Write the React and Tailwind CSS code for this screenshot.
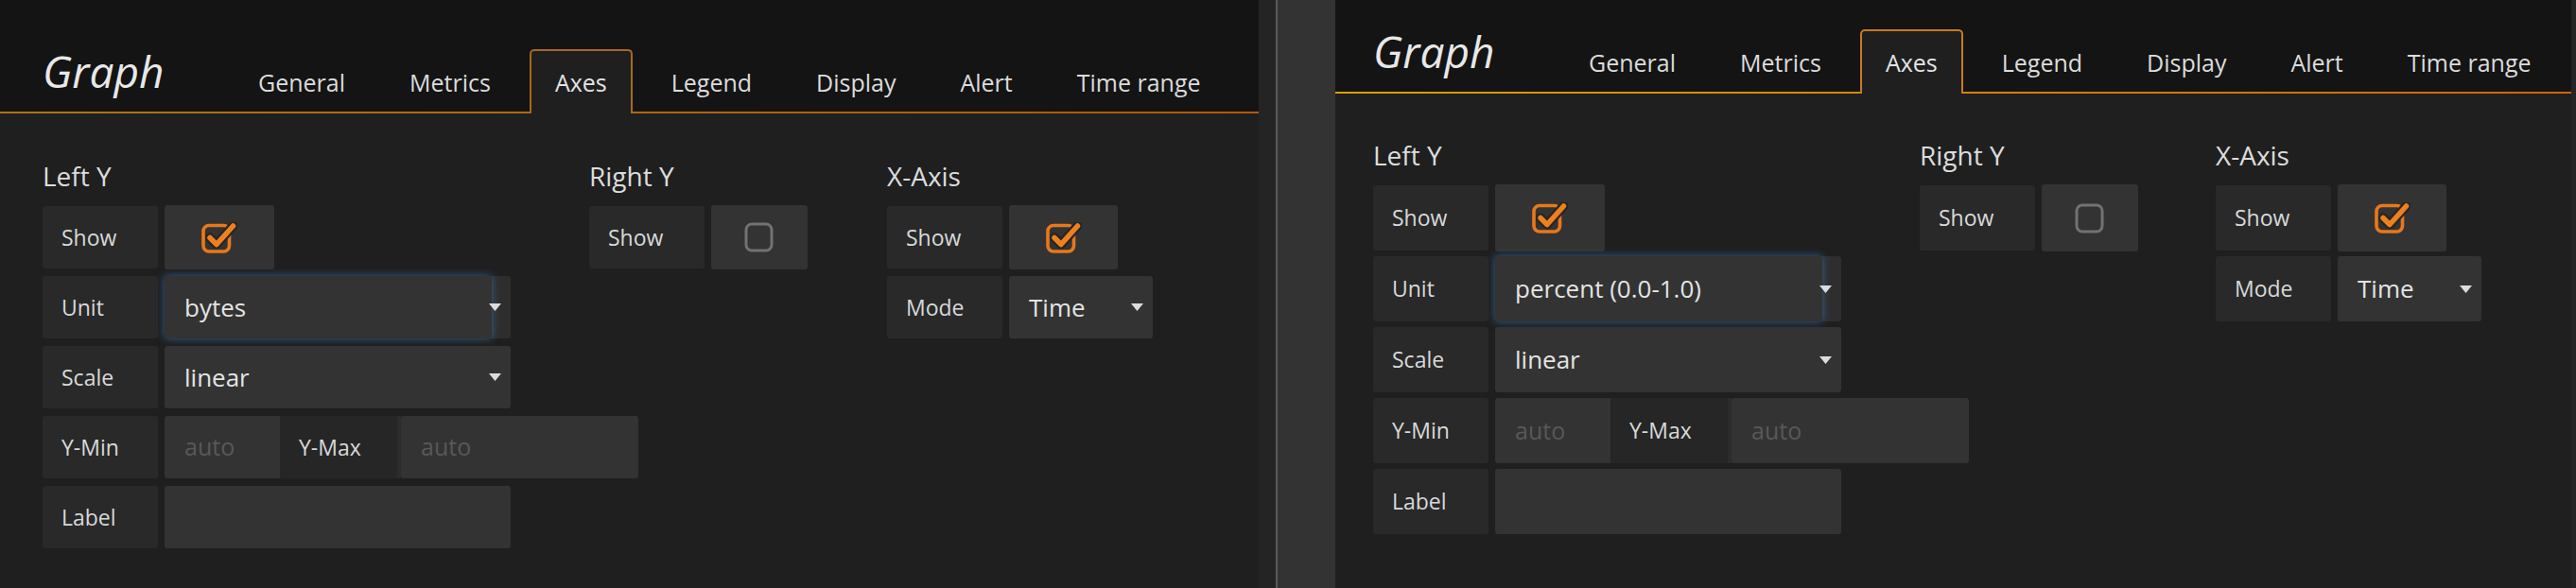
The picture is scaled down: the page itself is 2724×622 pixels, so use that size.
import React from "react";

const TABS = ["General", "Metrics", "Axes", "Legend", "Display", "Alert", "Time range"];

function Caret() {
  return (
    <svg
      width="13"
      height="8"
      viewBox="0 0 13 8"
      className="absolute right-[10px] top-1/2 -translate-y-1/2"
    >
      <polygon points="0,0 13,0 6.5,8" fill="#dcdcdc" />
    </svg>
  );
}

function CheckOn() {
  return (
    <svg width="38" height="33" viewBox="0 0 38 33">
      <rect x="2" y="3.5" width="27.5" height="27.5" rx="6" fill="none" stroke="#e8781a" strokeWidth="3.6" />
      <path d="M9 16.5 L16 23.5 L33.5 4" fill="none" stroke="#262626" strokeWidth="10" strokeLinecap="round" strokeLinejoin="round" />
      <path d="M9 16.5 L16 23.5 L33.5 4" fill="none" stroke="#f0801c" strokeWidth="5.5" strokeLinecap="round" strokeLinejoin="round" />
    </svg>
  );
}

function CheckOff() {
  return (
    <svg width="32" height="32" viewBox="0 0 32 32">
      <rect x="2" y="2" width="27" height="28" rx="6" fill="none" stroke="#727272" strokeWidth="3" />
    </svg>
  );
}

function FormLabel({ children, className = "" }) {
  return (
    <div
      className={
        "flex h-full w-[122px] shrink-0 items-center rounded-[3px] bg-[#292929] pl-[20px] text-[23px] text-[#d8d9da] " +
        className
      }
    >
      {children}
    </div>
  );
}

function Row({ right, children }) {
  return (
    <div
      className={
        "flex items-center whitespace-nowrap " + (right ? "mb-[6px] h-[69px]" : "mb-[8px] h-[66px]")
      }
    >
      {children}
    </div>
  );
}

function Select({ value, className, focused }) {
  return (
    <div
      className={
        "relative flex h-full shrink-0 items-center rounded-[3px] " +
        (focused ? "bg-[#2e2e2e] " : "bg-[#333333] ") +
        className
      }
    >
      {focused && (
        <div className="absolute inset-y-0 left-0 right-[20px] rounded-[3px] bg-[#333333] shadow-[0_0_9px_rgba(64,140,210,0.6)]" />
      )}
      <span className="relative pl-[21px] text-[26px] text-[#e4e4e4]">{value}</span>
      <Caret />
    </div>
  );
}

function Input({ className, placeholder }) {
  return (
    <div className={"flex h-full shrink-0 items-center rounded-[3px] bg-[#333333] pl-[21px] text-[25px] text-[#585858] " + className}>
      {placeholder}
    </div>
  );
}

function CheckCell({ on, className }) {
  return (
    <div className={"flex h-[calc(100%+2px)] shrink-0 items-center justify-center rounded-[3px] bg-[#333333] " + className}>
      {on ? <CheckOn /> : <CheckOff />}
    </div>
  );
}

function Section({ title, className, children }) {
  return (
    <div className={"shrink-0 " + className}>
      <div className="mb-[15px] text-[28px] leading-[34px] text-[#dcdcdc]">{title}</div>
      {children}
    </div>
  );
}

function Panel({ right }) {
  return (
    <div className={"flex shrink-0 flex-col bg-[#1f1f20] " + (right ? "w-[1307px]" : "w-[1331px]")}>
      <div className={"relative flex whitespace-nowrap bg-[#141414] " + (right ? "pl-[40px] pt-[31px]" : "pl-[45px] pt-[52px]")}>
        <div className="w-[201px] shrink-0 text-[46px] italic leading-[46px] text-[#e8e8e8]">Graph</div>
        <div className="flex shrink-0">
          {TABS.map((t) =>
            t === "Axes" ? (
              <div
                key={t}
                className={
                  "relative z-10 mr-[14px] h-[68px] shrink-0 rounded-t-[5px] border-2 border-b-0 bg-[#1f1f20] px-[25px] text-[25px] leading-[66px] text-[#e4e4e4] " +
                  (right ? "border-[#c97a1e]" : "border-[#a8681c]")
                }
              >
                {t}
              </div>
            ) : (
              <div
                key={t}
                className="mr-[14px] h-[68px] shrink-0 border-2 border-b-0 border-transparent px-[25px] text-[25px] leading-[66px] text-[#dcdcdc]"
              >
                {t}
              </div>
            )
          )}
        </div>
        <div
          className={
            "absolute bottom-0 left-0 right-0 h-[2px] bg-linear-to-r " +
            (right ? "from-[#d6a00c] to-[#cd640f]" : "from-[#ad731c] to-[#b0580f]")
          }
        />
      </div>

      <div className={"flex " + (right ? "pl-[40px] pt-[48px]" : "pl-[45px] pt-[49px]")}>
        <Section title="Left Y" className="w-[578px]">
          <Row right={right}>
            <FormLabel className="mr-[7px]">Show</FormLabel>
            <CheckCell on className="w-[116px]" />
          </Row>
          <Row right={right}>
            <FormLabel className="mr-[7px]">Unit</FormLabel>
            <Select value={right ? "percent (0.0-1.0)" : "bytes"} className="w-[366px]" focused />
          </Row>
          <Row right={right}>
            <FormLabel className="mr-[7px]">Scale</FormLabel>
            <Select value="linear" className="w-[366px]" />
          </Row>
          <Row right={right}>
            <FormLabel className="mr-[7px]">Y-Min</FormLabel>
            <Input className="w-[122px] rounded-r-none" placeholder="auto" />
            <div className="flex h-full w-[124px] shrink-0 items-center bg-[#262626] pl-[20px] text-[23px] text-[#d8d9da]">
              Y-Max
            </div>
            <div className="h-full w-[4px] shrink-0 bg-[#2c2c2c]" />
            <Input className="w-[251px]" placeholder="auto" />
          </Row>
          <Row right={right}>
            <FormLabel className="mr-[7px]">Label</FormLabel>
            <Input className="w-[366px]" placeholder="" />
          </Row>
        </Section>

        <Section title="Right Y" className={right ? "w-[313px]" : "w-[315px]"}>
          <Row right={right}>
            <FormLabel className="mr-[7px]">Show</FormLabel>
            <CheckCell className="w-[102px]" />
          </Row>
        </Section>

        <Section title="X-Axis" className="w-[320px]">
          <Row right={right}>
            <FormLabel className="mr-[7px]">Show</FormLabel>
            <CheckCell on className="w-[115px]" />
          </Row>
          <Row right={right}>
            <FormLabel className="mr-[7px]">Mode</FormLabel>
            <Select value="Time" className="w-[152px]" />
          </Row>
        </Section>
      </div>
    </div>
  );
}

export default function App() {
  return (
    <div
      className="flex h-[622px] w-[2724px] overflow-hidden bg-[#1f1f20]"
      style={{ fontFamily: '"Open Sans", "Noto Sans", "Liberation Sans", sans-serif' }}
    >
      <Panel />
      <div className="w-[18px] shrink-0 bg-[#242424]" />
      <div className="w-[2px] shrink-0 bg-[#5a5a5a]" />
      <div className="w-[61px] shrink-0 bg-[#333333]" />
      <Panel right />
      <div className="w-[5px] shrink-0 bg-[#252525]" />
    </div>
  );
}
